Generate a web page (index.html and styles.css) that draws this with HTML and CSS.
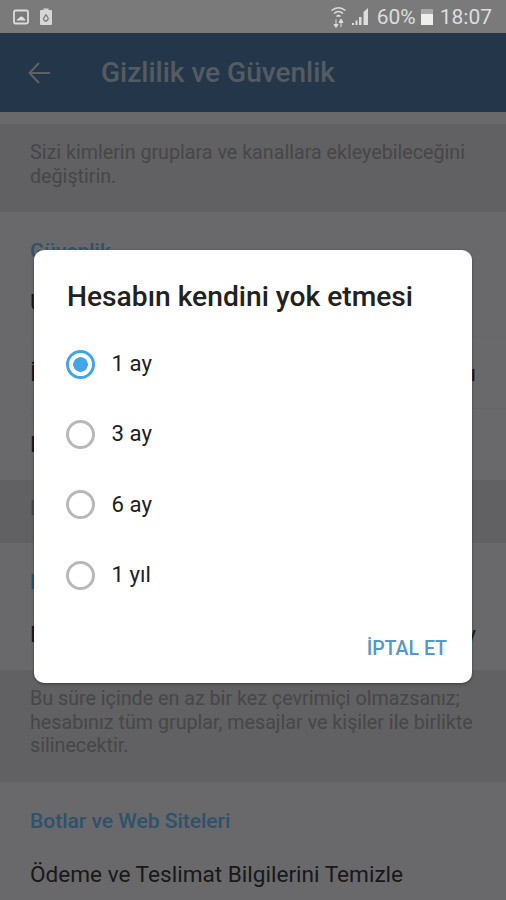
FILE: index.html
```html
<!DOCTYPE html>
<html lang="tr">
<head>
  <meta charset="UTF-8">
  <meta name="viewport" content="width=device-width, initial-scale=1.0">
  <title>Gizlilik ve Güvenlik</title>
  <link rel="stylesheet" href="styles.css">
</head>
<body>
  <div class="status-bar">
    <div class="status-left">
      <svg width="16" height="16" viewBox="0 0 16 16"><rect x="1" y="1.500" width="14" height="13" rx="1.500" fill="none" stroke="#dcdcdc" stroke-width="1.800"/><path d="M3.500 11.500 Q4 9.500 5.500 9.500 Q6.500 7.500 8.500 7.500 Q10.500 7.500 11 9.500 Q12.500 10 12.500 11.500 Z" fill="#dcdcdc"/></svg>
      <svg width="12" height="17" viewBox="0 0 12 17"><path d="M3.500 0.500 H8.500 V2 H11 Q12 2 12 3 V16 Q12 17 11 17 H1 Q0 17 0 16 V3 Q0 2 1 2 H3.500 Z" fill="#d6d6d6"/><path d="M6 6.500 L8.500 10.500 M8.500 10.500 L6.500 13 H4.500 M4.500 13 L3.500 10.500 L6 6.500" fill="none" stroke="#7a7a7a" stroke-width="1.300"/></svg>
    </div>
    <div class="status-right">
      <svg width="15" height="24" viewBox="0 0 15 24"><g fill="none" stroke="#dcdcdc" stroke-width="1.500"><path d="M0.500 5.500 Q7.500 0 14.500 5.500"/><path d="M3 8.500 Q7.500 4.500 12 8.500"/><path d="M5.500 11.500 Q7.500 9.800 9.500 11.500"/></g><path d="M5 14.500 V20 M5 22.500 L3 19.500 H7 Z M10 22 V17 M10 14 L8 17.500 H12 Z" stroke="#dcdcdc" stroke-width="1" fill="#dcdcdc"/></svg>
      <svg class="signal" width="17" height="17" viewBox="0 0 17 17"><path d="M0 15 H2 V17 H0 Z M3.500 12.500 H5.500 V17 H3.500 Z M7 9 H9.500 V17 H7 Z M11.500 4 L16 0 V17 H11.500 Z" fill="#dcdcdc"/></svg>
      <span class="battery-level">60%</span>
      <div class="battery"><div class="battery-fill"></div></div>
      <span class="clock">18:07</span>
    </div>
  </div>

  <div class="app-bar">
    <svg class="back" width="24" height="24" viewBox="0 0 24 24"><path d="M23 12 H2.500 M12 2 L2.500 12 L12 22" fill="none" stroke="#fff" stroke-width="2"/></svg>
    <span class="app-title">Gizlilik ve Güvenlik</span>
  </div>

  <div class="settings">
    <div class="help-text help-top">Sizi kimlerin gruplara ve kanallara ekleyebileceğini değiştirin.</div>
    <div class="section">
      <div class="section-title">Güvenlik</div>
      <div class="row row-first">Uygulama Kilidi</div>
      <div class="row row-value">
        <span>İki Adımlı Doğrulama</span>
        <span>Kapalı</span>
      </div>
      <div class="row row-plain">Etkin Oturumlar</div>
    </div>
    <div class="help-text help-mid">Diğer cihazlarınızı yönetin.</div>
    <div class="section">
      <div class="section-title">Hesabımı Sil</div>
      <div class="row row-value row-plain row-tall">
        <span>Eğer hesabım şu süre boyunca</span>
        <span>1 ay</span>
      </div>
    </div>
    <div class="help-text help-bottom">Bu süre içinde en az bir kez çevrimiçi olmazsanız; hesabınız tüm gruplar, mesajlar ve kişiler ile birlikte silinecektir.</div>
    <div class="section">
      <div class="section-title">Botlar ve Web Siteleri</div>
      <div class="row row-plain row-last">Ödeme ve Teslimat Bilgilerini Temizle</div>
    </div>
  </div>

  <div class="overlay">
    <div class="dialog">
      <div class="dialog-title">Hesabın kendini yok etmesi</div>
      <div class="option"><span class="radio radio-on"></span>1 ay</div>
      <div class="option"><span class="radio"></span>3 ay</div>
      <div class="option"><span class="radio"></span>6 ay</div>
      <div class="option"><span class="radio"></span>1 yıl</div>
      <div class="dialog-actions"><span class="cancel">İPTAL ET</span></div>
    </div>
  </div>
</body>
</html>
```

FILE: styles.css
```css
html, body {
  margin: 0;
  height: 900px;
  overflow: hidden;
}
body {
  position: relative;
  width: 506px;
  font-family: Roboto, "Noto Sans", sans-serif;
  background: #faf8fe;
  color: #3c3c3c;
}
.status-bar {
  height: 33px;
  background: #7a7a7a;
  display: flex;
  justify-content: space-between;
  align-items: center;
  padding: 0 14px 0 13px;
  position: relative;
  z-index: 2;
}
.status-left {
  display: flex;
  gap: 11px;
  align-items: center;
}
.status-right {
  display: flex;
  align-items: center;
  color: #dedede;
  font-size: 21px;
}
.signal {
  margin-left: 6px;
}
.battery-level {
  margin-left: 8px;
}
.battery {
  width: 12px;
  height: 16px;
  margin-left: 5px;
  background: #a8a8a8;
  border-radius: 1px;
  display: flex;
  align-items: flex-end;
}
.battery-fill {
  width: 100%;
  height: 11px;
  background: #eeeeee;
}
.clock {
  margin-left: 7px;
}
.app-bar {
  height: 79px;
  background: #5783b0;
  display: flex;
  align-items: center;
  color: #c8d8e8;
}
.back {
  margin-left: 27px;
  opacity: 0.8;
}
.app-title {
  margin-left: 50px;
  font-size: 28px;
  font-weight: 500;
}
.settings {
  padding-top: 12px;
}
.help-text {
  background: #e6e5e9;
  color: #a9a9ad;
  font-size: 19.700px;
  line-height: 23.500px;
  padding: 17px 30px 0;
  box-sizing: border-box;
}
.help-top {
  height: 88px;
}
.help-mid {
  height: 63px;
}
.help-bottom {
  height: 112px;
  padding-right: 20px;
}
.section {
  padding: 0 30px;
}
.section-title {
  color: #6cc5ff;
  font-size: 21px;
  font-weight: 500;
  padding-top: 27px;
  line-height: 24px;
}
.row {
  font-size: 22.600px;
  line-height: 71px;
  white-space: nowrap;
  border-bottom: 1px solid #f2f2f2;
  margin-right: -30px;
  padding-right: 30px;
  height: 71px;
  box-sizing: border-box;
}
.row-first {
  margin-top: 4px;
}
.row-value {
  display: flex;
  justify-content: space-between;
}
.row-plain {
  border-bottom: none;
}
.row-tall {
  margin-top: 5px;
}
.row-last {
  margin-top: 6px;
}
.overlay {
  position: absolute;
  inset: 33px 0 0 0;
  background: rgba(0, 0, 0, 0.58);
}
.dialog {
  position: absolute;
  left: 34px;
  top: 217px;
  width: 438px;
  height: 433px;
  box-sizing: border-box;
  background: #fff;
  border-radius: 10px;
  box-shadow: 0 1px 3px rgba(0, 0, 0, 0.4);
  padding: 29px 25px 0 33px;
}
.dialog-title {
  font-size: 28.200px;
  font-weight: 500;
  color: #212121;
  line-height: 36px;
  margin-bottom: 13px;
}
.option {
  height: 70.300px;
  display: flex;
  align-items: center;
  font-size: 22.200px;
  color: #212121;
}
.radio {
  width: 29px;
  height: 29px;
  box-sizing: border-box;
  margin: 2px 17px 0 -1.500px;
  border: 3px solid #b8b8b8;
  border-radius: 50%;
}
.radio-on {
  border-color: #42a5e8;
  background: radial-gradient(circle, #42a5e8 0 7px, #fff 7.500px);
}
.dialog-actions {
  display: flex;
  justify-content: flex-end;
  margin-top: 28px;
}
.cancel {
  color: #5498c8;
  font-size: 19.500px;
  font-weight: 500;
}
```
